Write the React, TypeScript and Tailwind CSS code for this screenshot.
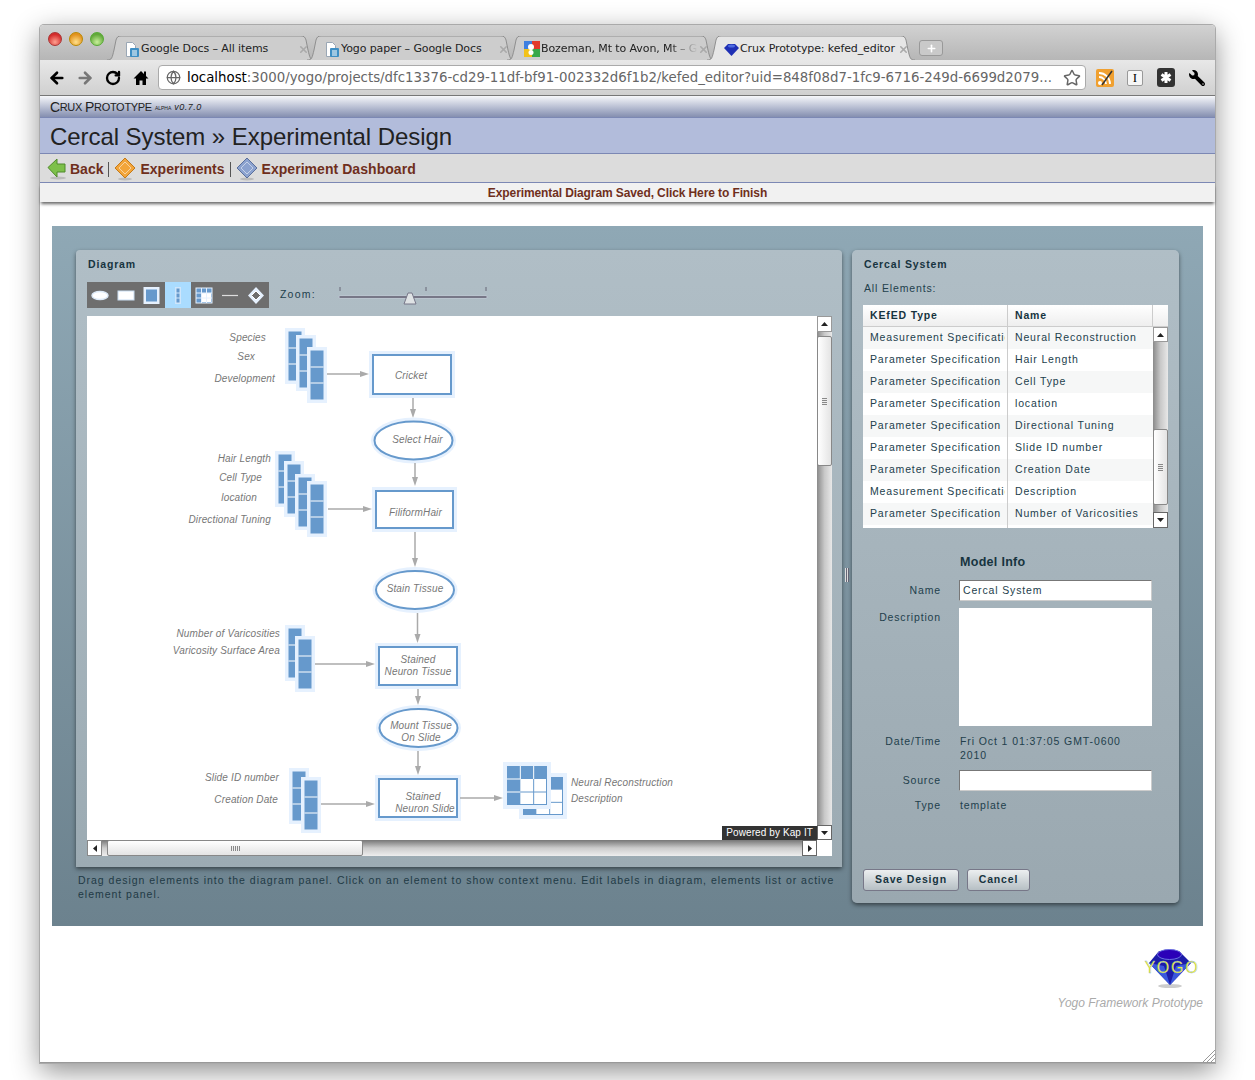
import type { ReactNode } from "react";
import { ArrowLeft, ArrowRight, RotateCw, Star, Globe, Plus, X } from "lucide-react";
import { FaWrench } from "react-icons/fa";

const rows = [
  ["Measurement Specification", "Neural Reconstruction"],
  ["Parameter Specification", "Hair Length"],
  ["Parameter Specification", "Cell Type"],
  ["Parameter Specification", "location"],
  ["Parameter Specification", "Directional Tuning"],
  ["Parameter Specification", "Slide ID number"],
  ["Parameter Specification", "Creation Date"],
  ["Measurement Specification", "Description"],
  ["Parameter Specification", "Number of Varicosities"],
];

function DocIcon() {
  return (
    <svg width="16" height="17" viewBox="0 0 16 17" className="shrink-0">
      <path d="M2.500 1.500h6l3 3v11h-9z" fill="#fff" stroke="#9aa7b5" />
      <rect x="6" y="7" width="9" height="9" rx="1" fill="#3f8fc4" />
      <path d="M8 10h5M8 12h5M8 14h5" stroke="#fff" />
    </svg>
  );
}

function GoogleIcon() {
  return (
    <svg width="16" height="16" viewBox="0 0 16 16" className="shrink-0">
      <rect width="8" height="8" fill="#3f7fe0" />
      <rect x="8" width="8" height="8" fill="#e2392c" />
      <rect y="8" width="8" height="8" fill="#f2c21a" />
      <rect x="8" y="8" width="8" height="8" fill="#37a84a" />
      <circle cx="7" cy="6" r="3" fill="#fff" />
      <circle cx="7" cy="11.500" r="2.500" fill="#fff" />
    </svg>
  );
}

function GemIcon() {
  return (
    <svg width="15" height="13" viewBox="0 0 15 13" className="shrink-0">
      <path d="M4 1h7l4 4-7.500 8L0 5z" fill="#1e2fb4" />
      <ellipse cx="7.500" cy="3" rx="3.500" ry="1.500" fill="#4d6be0" />
    </svg>
  );
}

function Tab({ title, icon, active, fade }: { title: string; icon: ReactNode; active?: boolean; fade?: boolean }) {
  const width = 208;
  const path = `M0 24 C5 24 5 22 7 14 L9 4 C10 1 11 0 14 0 L${width - 14} 0 C${width - 11} 0 ${width - 10} 1 ${width - 9} 4 L${width - 7} 14 C${width - 5} 22 ${width - 5} 24 ${width} 24`;
  return (
    <div className={`relative h-[24px] w-[208px] -mr-[8px] ${active ? "z-10" : ""}`}>
      <svg className="absolute inset-0" width={width} height="24">
        <path d={path} fill={active ? "#e6e6e6" : "#cdcdcd"} stroke="#8f8f8f" />
      </svg>
      <div className="relative flex h-full items-center pl-[17px] pr-[6px] pt-[2px] text-[11px] text-[#222] [font-family:'DejaVu_Sans',sans-serif]">
        <span className="mr-[1px]">{icon}</span>
        <span className={`min-w-0 flex-1 overflow-hidden whitespace-nowrap tracking-[-0.1px] ${fade ? "[mask-image:linear-gradient(90deg,#000_82%,transparent)]" : ""}`}>{title}</span>
        <X size={11} strokeWidth={3.5} className="shrink-0 text-[#aaa]" />
      </div>
    </div>
  );
}

function Stack({ x, y, w = 20, h = 56 }: { x: number; y: number; w?: number; h?: number }) {
  const ih = h - 8;
  return (
    <g>
      <rect x={x} y={y} width={w} height={h} fill="#e6f1fe" />
      <rect x={x + 3.500} y={y + 3.500} width={w - 7} height={ih + 1} fill="#6699cc" />
      <path d={`M${x + 3.500} ${y + 4 + ih / 3}h${w - 7}M${x + 3.500} ${y + 4 + (2 * ih) / 3}h${w - 7}`} stroke="#fff" />
    </g>
  );
}

function Box({ x, y, w, h }: { x: number; y: number; w: number; h: number }) {
  return (
    <g>
      <rect x={x - 4} y={y - 4} width={w + 8} height={h + 8} fill="#e6f1fe" />
      <rect x={x} y={y} width={w} height={h} fill="#fff" stroke="#6699cc" strokeWidth="2" />
    </g>
  );
}

function Oval({ cx, cy }: { cx: number; cy: number }) {
  return (
    <g>
      <ellipse cx={cx} cy={cy} rx="42.500" ry="23" fill="#e6f1fe" />
      <ellipse cx={cx} cy={cy} rx="39" ry="19" fill="#fff" stroke="#6699cc" strokeWidth="2" />
    </g>
  );
}

function ArrowH({ x1, x2, y }: { x1: number; x2: number; y: number }) {
  return (
    <g>
      <path d={`M${x1} ${y}H${x2 - 6}`} stroke="#aaa" strokeWidth="1.500" />
      <path d={`M${x2 - 9} ${y - 3}L${x2} ${y}L${x2 - 9} ${y + 3}z`} fill="#aaa" />
    </g>
  );
}

function ArrowV({ x, y1, y2 }: { x: number; y1: number; y2: number }) {
  return (
    <g>
      <path d={`M${x} ${y1}V${y2 - 6}`} stroke="#aaa" strokeWidth="1.500" />
      <path d={`M${x - 3} ${y2 - 9}L${x} ${y2}L${x + 3} ${y2 - 9}z`} fill="#aaa" />
    </g>
  );
}

function Label({ x, y, t, a = "start" }: { x: number; y: number; t: string; a?: "start" | "middle" | "end" }) {
  return (
    <text x={x} y={y} textAnchor={a} fontSize="10" fontStyle="italic" letterSpacing="0.15" fill="#777" fontFamily="'Liberation Sans', sans-serif">
      {t}
    </text>
  );
}

function GridShape({ x, y, w, h }: { x: number; y: number; w: number; h: number }) {
  const ix = x + 4;
  const iy = y + 4;
  const iw = w - 8;
  const ih = h - 8;
  return (
    <g>
      <rect x={x} y={y} width={w} height={h} fill="#e6f1fe" />
      <rect x={ix} y={iy} width={iw} height={ih} fill="#6699cc" />
      <path d={`M${ix + iw / 3} ${iy}v${ih / 3}M${ix + (2 * iw) / 3} ${iy}v${ih / 3}M${ix} ${iy + ih / 3}h${iw / 3}M${ix} ${iy + (2 * ih) / 3}h${iw / 3}`} stroke="#fff" />
      <rect x={ix + iw / 3} y={iy + ih / 3} width={(2 * iw) / 3 - 1} height={(2 * ih) / 3 - 1} fill="#fff" />
      <path d={`M${ix + (2 * iw) / 3} ${iy + ih / 3}v${(2 * ih) / 3 - 1}M${ix + iw / 3} ${iy + (2 * ih) / 3}h${(2 * iw) / 3 - 1}`} stroke="#6699cc" />
    </g>
  );
}

function Diagram() {
  return (
    <svg width="730" height="524" viewBox="87 316 730 524" className="block bg-white">
      <Label x={266} y={341} t="Species" a="end" />
      <Label x={255} y={360} t="Sex" a="end" />
      <Label x={275} y={382} t="Development" a="end" />
      <Stack x={285} y={328} />
      <Stack x={296} y={335} />
      <Stack x={307} y={347} />
      <ArrowH x1={327} x2={369} y={374} />
      <Box x={373} y={355} w={78} h={39} />
      <Label x={411} y={379} t="Cricket" a="middle" />
      <ArrowV x={413} y1={398} y2={418} />
      <Oval cx={413.500} cy={440.500} />
      <Label x={417.500} y={443} t="Select Hair" a="middle" />
      <ArrowV x={415} y1={463} y2={486} />

      <Label x={271} y={462} t="Hair Length" a="end" />
      <Label x={262} y={481} t="Cell Type" a="end" />
      <Label x={257} y={501} t="location" a="end" />
      <Label x={271} y={523} t="Directional Tuning" a="end" />
      <Stack x={275} y={451} />
      <Stack x={284} y={461} />
      <Stack x={295} y={474} />
      <Stack x={307} y={481} />
      <ArrowH x1={328} x2={372} y={509} />
      <Box x={376} y={491} w={77} h={37} />
      <Label x={415.500} y={516} t="FiliformHair" a="middle" />
      <ArrowV x={415} y1={532} y2={567} />
      <Oval cx={415} cy={590} />
      <Label x={415} y={592} t="Stain Tissue" a="middle" />
      <ArrowV x={417.500} y1={613} y2={643} />

      <Label x={280} y={637} t="Number of Varicosities" a="end" />
      <Label x={280} y={654} t="Varicosity Surface Area" a="end" />
      <Stack x={285} y={625} />
      <Stack x={295} y={636} />
      <ArrowH x1={315} x2={375} y={664} />
      <Box x={379} y={647} w={78} h={38} />
      <Label x={418} y={663} t="Stained" a="middle" />
      <Label x={418} y={675} t="Neuron Tissue" a="middle" />
      <ArrowV x={418} y1={689} y2={705} />
      <Oval cx={418.500} cy={728} />
      <Label x={421} y={729} t="Mount Tissue" a="middle" />
      <Label x={421} y={741} t="On Slide" a="middle" />
      <ArrowV x={418} y1={751} y2={775} />

      <Label x={279} y={781} t="Slide ID number" a="end" />
      <Label x={278} y={803} t="Creation Date" a="end" />
      <Stack x={289} y={768} />
      <Stack x={301} y={777} />
      <ArrowH x1={321} x2={375} y={804} />
      <Box x={379} y={779} w={78} h={38} />
      <Label x={423} y={800} t="Stained" a="middle" />
      <Label x={425} y={812} t="Neuron Slide" a="middle" />
      <ArrowH x1={460} x2={503} y={798} />
      <GridShape x={519} y={773} w={48} h={46} />
      <GridShape x={503} y={762} w={48} h={47} />
      <Label x={571} y={786} t="Neural Reconstruction" />
      <Label x={571} y={802} t="Description" />
    </svg>
  );
}

function ToolIcon({ kind }: { kind: number }) {
  return (
    <svg width="26" height="26" viewBox="0 0 26 26">
      {kind === 0 && <ellipse cx="13" cy="13.500" rx="8" ry="4" fill="#fff" stroke="#dce9f7" strokeWidth="1.500" />}
      {kind === 1 && <rect x="5" y="9" width="16" height="9" fill="#fff" stroke="#c9ddf2" />}
      {kind === 2 && (
        <g>
          <rect x="4.500" y="5" width="16" height="17" fill="#e6f1fe" />
          <rect x="7" y="7.500" width="11" height="12" fill="#6699cc" />
        </g>
      )}
      {kind === 3 && (
        <g>
          <rect x="10" y="5" width="6" height="17" fill="#cfe6fb" />
          <rect x="11.500" y="6.500" width="3" height="14" fill="#6699cc" />
          <path d="M11 11h4M11 16h4" stroke="#cfe6fb" />
        </g>
      )}
      {kind === 4 && (
        <g>
          <rect x="5" y="6" width="16" height="15" fill="#6699cc" stroke="#e6f1fe" />
          <rect x="11" y="11" width="9" height="9" fill="#fff" />
          <path d="M10.500 6v15M15.500 6v15M5 11h16M5 16h16" stroke="#e6f1fe" />
        </g>
      )}
      {kind === 5 && <path d="M5 13.500h16" stroke="#ddd" strokeWidth="1.200" />}
      {kind === 6 && (
        <g>
          <path d="M13 5l8 8.500-8 8.500-8-8.500z" fill="#e6f1fe" />
          <path d="M13 9l4.500 4.500L13 18l-4.500-4.500z" fill="#6e6e6e" stroke="#fff" />
        </g>
      )}
    </svg>
  );
}

function Triangle({ up }: { up?: boolean }) {
  return (
    <svg width="7" height="4" viewBox="0 0 7 4">
      <path d={up ? "M3.500 0L7 4H0z" : "M0 0h7L3.500 4z"} fill="#222" />
    </svg>
  );
}

function Grip({ vertical }: { vertical?: boolean }) {
  return <div className={vertical ? "h-[7px] w-[5px] bg-[repeating-linear-gradient(180deg,#888_0,#888_1px,#eee_1px,#eee_2px)]" : "h-[5px] w-[9px] bg-[repeating-linear-gradient(90deg,#888_0,#888_1px,#eee_1px,#eee_2px)]"} />;
}

function Field({ label, children, className }: { label: string; children: ReactNode; className?: string }) {
  return (
    <div className={`flex ${className ?? ""}`}>
      <div className="w-[78px] shrink-0 text-right">{label}</div>
      <div className="ml-[18px] min-w-0 flex-1">{children}</div>
    </div>
  );
}

function NavArrow() {
  return (
    <svg width="20" height="24" viewBox="0 0 20 24">
      <ellipse cx="11" cy="21" rx="8" ry="1.500" fill="#bbb" />
      <path d="M1 10.500L10 2v5h8v8h-8v5z" fill="#7dc04a" stroke="#4f8a2a" />
    </svg>
  );
}

function NavDiamond({ a, b }: { a: string; b: string }) {
  return (
    <svg width="22" height="24" viewBox="0 0 22 24">
      <ellipse cx="11" cy="22" rx="7" ry="1.500" fill="#bbb" />
      <path d="M11 1l10 10-10 10L1 11z" fill={a} stroke={b} />
      <path d="M11 5l6 6-6 6-6-6z" fill="none" stroke="#ffffff80" />
    </svg>
  );
}

export default function App() {
  return (
    <div className="h-[1080px] w-[1255px] overflow-hidden bg-white pl-[40px] pt-[25px] [font-family:'Liberation_Sans',sans-serif]">
      <div className="relative flex h-[1038px] w-[1175px] flex-col rounded-t-[4px] border-b border-[#999] bg-white shadow-[0_0_0_1px_#aaa,0_8px_28px_rgba(0,0,0,0.45)]">
        {/* Tab strip */}
        <div className="flex h-[35px] shrink-0 items-end rounded-t-[4px] bg-gradient-to-b from-[#d2d2d2] to-[#b6b6b6] pl-[7px]">
          <div className="mb-[8px] flex w-[60px] gap-[7px] self-end pb-[6px] pl-[1px]">
            <span className="h-[14px] w-[14px] rounded-full border border-[#a33] bg-[radial-gradient(circle_at_50%_75%,#ffa090,#d42c2c_70%)]" />
            <span className="h-[14px] w-[14px] rounded-full border border-[#b80] bg-[radial-gradient(circle_at_50%_75%,#ffe08a,#e2921e_70%)]" />
            <span className="h-[14px] w-[14px] rounded-full border border-[#5a3] bg-[radial-gradient(circle_at_50%_75%,#c8f09a,#62a83a_70%)]" />
          </div>
          <Tab title="Google Docs – All items" icon={<DocIcon />} />
          <Tab title="Yogo paper – Google Docs" icon={<DocIcon />} />
          <Tab title="Bozeman, Mt to Avon, Mt – Google Maps" icon={<GoogleIcon />} fade />
          <Tab title="Crux Prototype: kefed_editor" icon={<GemIcon />} active />
          <div className="mb-[4px] ml-[12px] flex h-[16px] w-[24px] items-center justify-center rounded-[3px] border border-[#999] bg-[#c9c9c9]">
            <Plus size={11} strokeWidth={3.5} className="text-white" />
          </div>
        </div>

        {/* Toolbar */}
        <div className="flex h-[36px] shrink-0 items-center border-b border-[#777] bg-gradient-to-b from-[#e8e8e8] to-[#d0d0d0] pl-[8px]">
          <ArrowLeft size={18} strokeWidth={3.5} className="text-black" />
          <ArrowRight size={18} strokeWidth={3.5} className="ml-[10px] text-[#777]" />
          <RotateCw size={16} strokeWidth={3.5} className="ml-[11px] text-black" />
          <svg width="16" height="16" viewBox="0 0 16 16" className="ml-[12px]">
            <path d="M8 1L15.500 8.500H13V15H9.500V10.500H6.500V15H3V8.500H.5z" fill="#000" />
            <rect x="11" y="1.500" width="2" height="5" fill="#000" />
          </svg>
          <div className="ml-[9px] flex h-[25px] w-[928px] items-center rounded-[4px] border border-[#aaa] bg-white pl-[7px] pr-[4px] [font-family:'DejaVu_Sans',sans-serif] text-[13.330px] text-[#666]">
            <Globe size={15} className="mr-[6px] shrink-0 text-[#666]" />
            <span className="min-w-0 flex-1 overflow-hidden whitespace-nowrap">
              <span className="text-black">localhost</span>:3000/yogo/projects/dfc13376-cd29-11df-bf91-002332d6f1b2/kefed_editor?uid=848f08d7-1fc9-6716-249d-6699d2079...
            </span>
            <Star size={18} className="ml-[9px] shrink-0 text-[#666]" />
          </div>
          <svg width="18" height="18" viewBox="0 0 18 18" className="ml-[10px]">
            <rect width="18" height="18" rx="2" fill="#f0a030" />
            <circle cx="4" cy="14" r="2" fill="#fff" />
            <path d="M3 8a7 7 0 017 7M3 4a11 11 0 0111 11" stroke="#fff" strokeWidth="1.800" fill="none" />
            <path d="M6 16L16 2" stroke="#333" strokeWidth="1.500" />
          </svg>
          <div className="ml-[13px] flex h-[16px] w-[16px] items-center justify-center rounded-[2px] border border-[#999] bg-[#f6f6f6] [font-family:'Liberation_Serif',serif] text-[13px] leading-none text-black">I</div>
          <svg width="18" height="19" viewBox="0 0 18 19" className="ml-[14px]">
            <rect width="18" height="19" rx="3" fill="#333" />
            <path d="M9 4v11M4.500 6.500l9 6M13.500 6.500l-9 6" stroke="#fff" strokeWidth="3" />
          </svg>
          <FaWrench size={16} className="ml-[14px] -scale-x-100 text-black" />
        </div>

        {/* Page header */}
        <div className="flex h-[22px] shrink-0 items-center border-b border-[#7c88b4] bg-gradient-to-b from-[#f7f8fb] to-[#858fb0] pl-[10px] pt-[2px] text-[#222]">
          <span className="text-[14px] tracking-[-0.4px]">C</span>
          <span className="text-[11px] tracking-[-0.3px]">RUX</span>
          <span className="ml-[3px] text-[14px] tracking-[-0.4px]">P</span>
          <span className="text-[11px] tracking-[-0.3px]">ROTOTYPE</span>
          <span className="ml-[3px] mt-[3px] text-[5px]">ALPHA</span>
          <span className="ml-[3px] mt-[1px] text-[9px] italic tracking-[0.5px]">v0.7.0</span>
        </div>
        <div className="flex h-[36px] shrink-0 items-center border-b border-[#7c88b4] bg-[#b2bcdb] pl-[10px] pt-[2px] text-[24px] tracking-[-0.06px] text-[#222]">
          Cercal System » Experimental Design
        </div>
        <div className="flex h-[29px] shrink-0 items-center border-b border-[#7c88b4] bg-[#dcdcdc] pl-[7px] pt-[2px] text-[14px] font-bold text-[#6f2f1c]">
          <NavArrow />
          <span className="ml-[3px]">Back</span>
          <span className="mx-[5px] h-[15px] w-px bg-[#555]" />
          <NavDiamond a="#f3a53a" b="#c47a17" />
          <span className="ml-[4px]">Experiments</span>
          <span className="mx-[5px] h-[15px] w-px bg-[#555]" />
          <NavDiamond a="#8ba2cf" b="#5a6f9c" />
          <span className="ml-[4px] tracking-[0.05px]">Experiment Dashboard</span>
        </div>
        <div className="flex h-[19px] shrink-0 items-center justify-center bg-[#f1f1f1] text-[12px] font-bold tracking-[-0.1px] text-[#6f2f1c] shadow-[0_3px_3px_-1px_rgba(0,0,0,0.6)]">
          Experimental Diagram Saved, Click Here to Finish
        </div>

        {/* Editor */}
        <div className="ml-[12px] mt-[24px] flex h-[700px] w-[1151px] shrink-0 bg-gradient-to-b from-[#8fa8b5] to-[#6c828e] px-[24px] pt-[24px] text-[10.500px] tracking-[0.85px] text-[#22404c]">
          <div className="w-[766px] shrink-0">
            <div className="h-[617px] rounded-t-[4px] bg-gradient-to-b from-[#b0bec6] to-[#9cabb3] pl-[11px] shadow-[0_2px_4px_rgba(0,0,0,0.5)]">
              <div className="pl-[1px] pt-[8px] font-bold leading-[13px] text-[#17343f]">Diagram</div>
              <div className="mt-[11px] flex h-[26px] items-center">
                <div className="flex bg-[#6e6e6e]">
                  {[0, 1, 2, 3, 4, 5, 6].map((k) => (
                    <div key={k} className={k === 3 ? "bg-[#aadcff]" : ""}>
                      <ToolIcon kind={k} />
                    </div>
                  ))}
                </div>
                <span className="ml-[11px] tracking-[1.2px]">Zoom:</span>
                <svg width="150" height="20" viewBox="0 0 150 20" className="ml-[22px]">
                  <path d="M2 2v4M88 2v4M148 2v4" stroke="#667" />
                  <rect x="1" y="11" width="148" height="2" rx="1" fill="#556" stroke="#dde" strokeWidth="0.500" />
                  <path d="M70 8l4 0 4 11h-12z" fill="#dfe3e5" stroke="#778" />
                </svg>
              </div>
              <div className="mt-[8px] w-[745px]">
                <div className="relative flex h-[524px]">
                  <Diagram />
                  <div className="flex w-[15px] flex-col bg-gradient-to-r from-[#8a8a8a] via-[#c8c8c8] to-[#e8e8e8]">
                    <div className="flex h-[16px] items-center justify-center border border-[#999] bg-white"><Triangle up /></div>
                    <div className="mt-[4px] flex h-[130px] items-center justify-center rounded-[2px] border border-[#888] bg-gradient-to-r from-white to-[#e4e4e4]"><Grip vertical /></div>
                    <div className="flex-1" />
                    <div className="flex h-[15px] items-center justify-center border border-[#666] bg-white"><Triangle /></div>
                  </div>
                  <div className="absolute bottom-0 right-[15px] bg-[#333] px-[4px] text-[10px] leading-[14px] tracking-[0.1px] text-white">Powered by Kap IT</div>
                </div>
                <div className="flex h-[16px]">
                  <div className="flex w-[730px] bg-gradient-to-b from-[#777] via-[#ccc] to-[#eee]">
                    <div className="flex w-[15px] items-center justify-center border border-[#888] bg-white"><svg width="4" height="7" viewBox="0 0 4 7"><path d="M4 0v7L0 3.500z" fill="#222" /></svg></div>
                    <div className="ml-[5px] flex w-[256px] items-center justify-center rounded-[2px] border border-[#888] bg-gradient-to-b from-white to-[#e4e4e4]"><Grip /></div>
                    <div className="flex-1" />
                    <div className="flex w-[15px] items-center justify-center border border-[#666] bg-white"><svg width="4" height="7" viewBox="0 0 4 7"><path d="M0 0v7L4 3.500z" fill="#222" /></svg></div>
                  </div>
                  <div className="w-[15px] bg-white" />
                </div>
              </div>
            </div>
            <p className="mt-[6px] w-[766px] pl-[2px] leading-[14px] tracking-[0.98px] text-[#1f3a45]">
              Drag design elements into the diagram panel. Click on an element to show context menu. Edit labels in diagram, elements list or active element panel.
            </p>
          </div>

          <div className="flex w-[10px] shrink-0 items-start justify-center pt-[318px]">
            <div className="h-[14px] w-[4px] bg-[repeating-linear-gradient(90deg,#ddd_0,#ddd_1px,#667_1px,#667_2px)]" />
          </div>

          <div className="flex h-[653px] w-[327px] shrink-0 flex-col rounded-[5px] bg-gradient-to-b from-[#b0bec6] to-[#9aa8b0] pl-[11px] shadow-[0_2px_4px_rgba(0,0,0,0.5)]">
            <div className="pl-[1px] pt-[8px] font-bold leading-[13px] text-[#17343f]">Cercal System</div>
            <div className="mt-[11px] pl-[1px] leading-[13px]">All Elements:</div>
            <div className="mt-[10px] w-[305px] bg-white">
              <div className="flex h-[22px] border-b border-[#ccc] bg-gradient-to-b from-white to-[#eeeeee] font-bold leading-[21px] text-[#17343f]">
                <div className="w-[145px] border-r border-[#ccc] pl-[7px]">KEfED Type</div>
                <div className="w-[145px] border-r border-[#ccc] pl-[7px]">Name</div>
              </div>
              <div className="flex">
                <div className="w-[290px]">
                  {rows.map((row, i) => (
                    <div key={row[1]} className={`flex h-[22px] leading-[21px] ${i % 2 === 0 ? "bg-[#f6f7f7]" : "bg-white"}`}>
                      <div className="w-[145px] border-r border-[#ccc] pl-[7px]">
                        <div className="w-[135px] overflow-hidden whitespace-nowrap">{row[0]}</div>
                      </div>
                      <div className="w-[145px] overflow-hidden whitespace-nowrap pl-[7px]">{row[1]}</div>
                    </div>
                  ))}
                  <div className="h-[3px]"><div className="h-full w-[145px] border-r border-[#ccc]" /></div>
                </div>
                <div className="flex w-[15px] flex-col bg-gradient-to-r from-[#8a8a8a] via-[#c8c8c8] to-[#e8e8e8]">
                  <div className="flex h-[15px] items-center justify-center border border-[#999] bg-white"><Triangle up /></div>
                  <div className="mt-[87px] flex h-[76px] items-center justify-center rounded-[2px] border border-[#888] bg-gradient-to-r from-white to-[#e4e4e4]"><Grip vertical /></div>
                  <div className="flex-1" />
                  <div className="flex h-[16px] items-center justify-center border border-[#666] bg-white"><Triangle /></div>
                </div>
              </div>
            </div>

            <div className="ml-[97px] mt-[27px] text-[12.500px] font-bold leading-[14px] tracking-[0.3px] text-[#17343f]">Model Info</div>
            <Field label="Name" className="mt-[11px] items-center">
              <div className="flex h-[21px] w-[193px] items-center border border-[#777] border-b-[#ccc] border-r-[#ccc] bg-white pl-[3px]">Cercal System</div>
            </Field>
            <Field label="Description" className="mt-[7px] [&>div:first-child]:pt-[2px]">
              <div className="h-[118px] w-[193px] bg-white" />
            </Field>
            <Field label="Date/Time" className="mt-[8px] leading-[14px]">
              <div className="w-[185px] pl-[1px] tracking-[0.9px]">Fri Oct 1 01:37:05 GMT-0600 2010</div>
            </Field>
            <Field label="Source" className="mt-[8px] items-center">
              <div className="h-[21px] w-[193px] border border-[#777] border-b-[#ccc] border-r-[#ccc] bg-white" />
            </Field>
            <Field label="Type" className="mt-[7px] leading-[14px]">
              <div className="pl-[1px]">template</div>
            </Field>
            <div className="mt-[57px] flex gap-[8px] font-bold text-[#17343f]">
              <div className="flex h-[22px] w-[96px] items-center justify-center rounded-[3px] border border-[#778] bg-gradient-to-b from-[#eceff0] to-[#b6bfc4]">Save Design</div>
              <div className="flex h-[22px] w-[63px] items-center justify-center rounded-[3px] border border-[#778] bg-gradient-to-b from-[#eceff0] to-[#b6bfc4]">Cancel</div>
            </div>
          </div>
        </div>

        {/* Footer */}
        <div className="mr-[12px] mt-[22px] flex flex-col items-end">
          <svg width="56" height="40" viewBox="0 0 56 40" className="mr-[3px]">
            <ellipse cx="26" cy="38" rx="12" ry="2" fill="#ccc" />
            <path d="M15 3L35 3L47 15L26 37L5 15z" fill="#1c1ca8" />
            <path d="M5 15L20 18L26 37zM47 15L32 18L26 37z" fill="#3a58dc" />
            <ellipse cx="25.500" cy="6.500" rx="12" ry="5" fill="#2a00b8" stroke="#6a70e0" />
            <text x="28" y="25" textAnchor="middle" fontSize="16" letterSpacing="1.800" fontFamily="'Liberation Sans', sans-serif" fill="#eef02a" stroke="#7fa8e8" strokeWidth="0.300">YOGO</text>
          </svg>
          <div className="mt-[6px] text-[12px] italic text-[#aaa]">Yogo Framework Prototype</div>
        </div>

        {/* Resize grip */}
        <svg width="12" height="12" viewBox="0 0 12 12" className="absolute bottom-0 right-0">
          <path d="M0 12L12 0M4 12L12 4M8 12L12 8" stroke="#999" />
        </svg>
      </div>
    </div>
  );
}
